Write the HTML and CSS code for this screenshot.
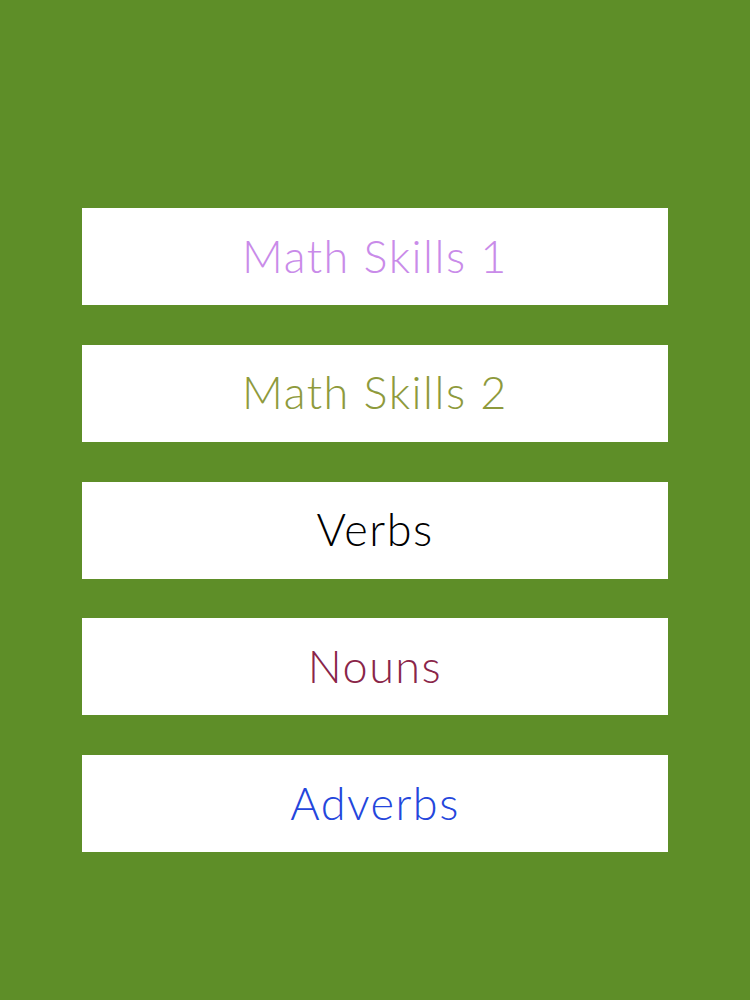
FILE: index.html
```html
<!DOCTYPE html>
<html>
<head>
<meta charset="utf-8">
<link rel="stylesheet" href="styles.css">
</head>
<body>
<div class="menu">
  <div class="item c1">Math Skills 1</div>
  <div class="item c2">Math Skills 2</div>
  <div class="item c3">Verbs</div>
  <div class="item c4">Nouns</div>
  <div class="item c5">Adverbs</div>
</div>
</body>
</html>
```
FILE: styles.css
```css
html, body {
  margin: 0;
  padding: 0;
  background: #5e8e28;
  height: 100%;
}
.menu {
  display: flex;
  flex-direction: column;
  gap: 39.75px;
  padding: 208px 82px 0 82px;
}
.item {
  background: #ffffff;
  height: 97px;
  display: flex;
  align-items: center;
  justify-content: center;
  font-family: "Lato", "Open Sans", sans-serif;
  font-weight: 300;
  font-size: 45px;
  letter-spacing: 1.5px;
  padding-bottom: 2px;
  box-sizing: border-box;
}
.c1 { color: #c98be9; }
.c2 { color: #8e9a3c; }
.c3 { color: #000000; }
.c4 { color: #8a2549; }
.c5 { color: #2446dc; }
```
